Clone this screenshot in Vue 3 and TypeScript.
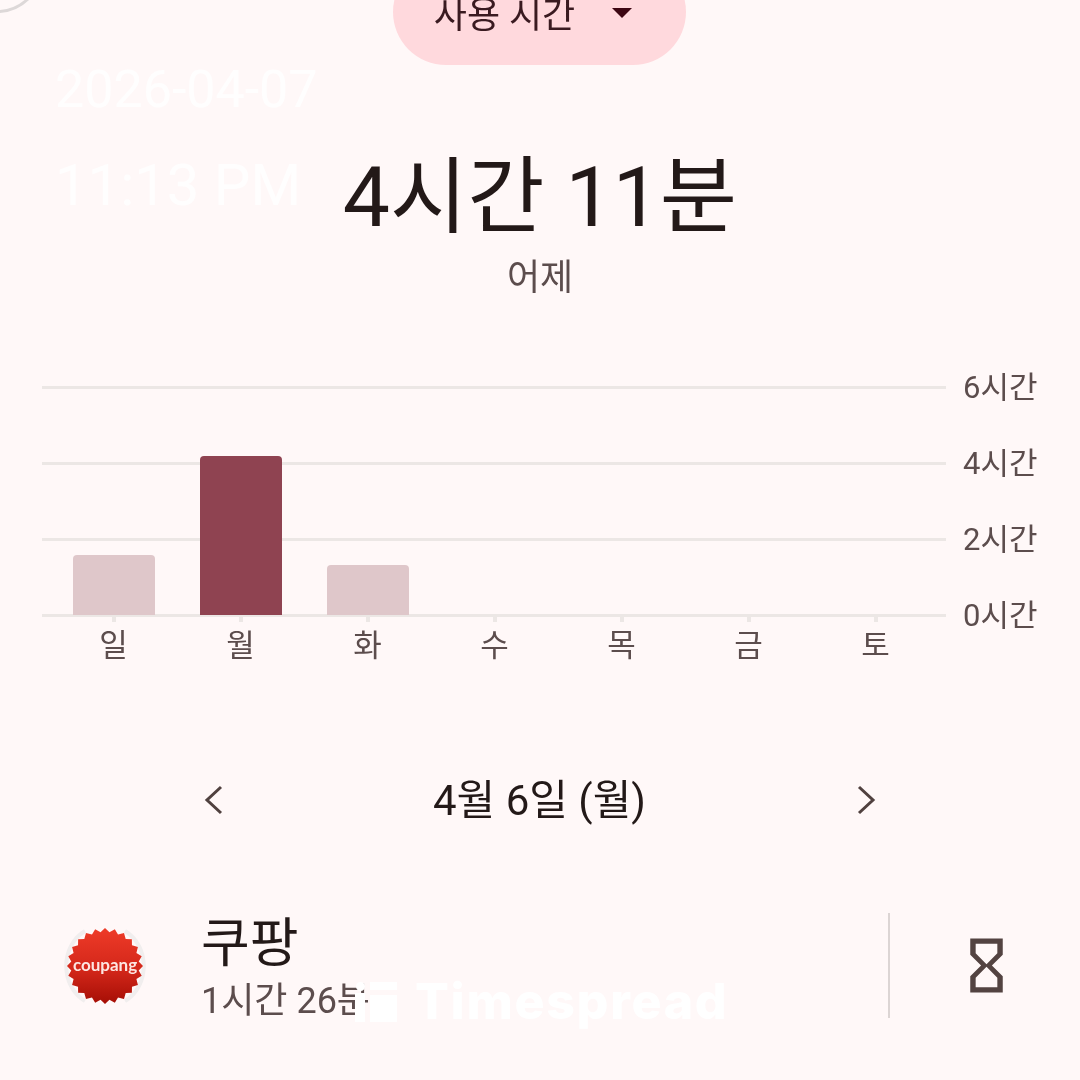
<script setup lang="ts">
const gridLabels = ['6시간', '4시간', '2시간', '0시간']

// bar height in px, measured from the axis
const days = [
  { label: '일', height: 60, active: false },
  { label: '월', height: 159, active: true },
  { label: '화', height: 50, active: false },
  { label: '수', height: 0, active: false },
  { label: '목', height: 0, active: false },
  { label: '금', height: 0, active: false },
  { label: '토', height: 0, active: false },
]

// the coupang badge is a scalloped disc, so work the outline out
const teeth = 24
const badgePoints = Array.from({ length: teeth * 2 }, (_, i) => {
  const r = i % 2 === 0 ? 38 : 34
  const a = (Math.PI * i) / teeth
  return `${(42 + r * Math.cos(a)).toFixed(2)},${(42 + r * Math.sin(a)).toFixed(2)}`
}).join(' ')
</script>

<template>
  <div class="screen">
    <div class="corner-ring"></div>

    <button class="pill" type="button">
      <span>사용 시간</span>
      <i class="caret"></i>
    </button>

    <h1 class="total">4시간 11분</h1>
    <p class="when">어제</p>

    <section class="chart">
      <div class="plot">
        <div class="grid">
          <div v-for="l in gridLabels" :key="l" class="grid-line"></div>
        </div>
        <div class="bars">
          <div v-for="d in days" :key="d.label" class="bar-col">
            <div class="bar" :class="{ active: d.active }" :style="{ height: d.height + 'px' }"></div>
          </div>
        </div>
        <div class="days">
          <div v-for="d in days" :key="d.label" class="day">
            <i class="tick"></i>
            <span>{{ d.label }}</span>
          </div>
        </div>
      </div>
      <div class="y-labels">
        <span v-for="l in gridLabels" :key="l">{{ l }}</span>
      </div>
    </section>

    <nav class="date-nav">
      <svg class="chev" width="24" height="36" viewBox="0 0 24 36" fill="none">
        <path d="M20 5 6 18l14 13" />
      </svg>
      <span class="date">4월 6일 (월)</span>
      <svg class="chev" width="24" height="36" viewBox="0 0 24 36" fill="none">
        <path d="m5 5 14 13L5 31" />
      </svg>
    </nav>

    <div class="app-row">
      <svg class="app-icon" width="84" height="84" viewBox="0 0 84 84">
        <defs>
          <linearGradient id="badge" x1="0" y1="0" x2="0" y2="1">
            <stop offset="0" stop-color="#ee3b28" />
            <stop offset="0.55" stop-color="#d3271a" />
            <stop offset="1" stop-color="#a50e05" />
          </linearGradient>
        </defs>
        <path class="badge-shade" d="M22 7C-3 22-3 62 22 77M62 7c25 15 25 55 0 70" />
        <polygon :points="badgePoints" fill="url(#badge)" />
        <text x="42" y="47" text-anchor="middle" class="badge-text">coupang</text>
      </svg>
      <div class="app-text">
        <div class="app-name">쿠팡</div>
        <div class="app-time">1시간 26분</div>
      </div>
      <div class="divider"></div>
      <svg class="hourglass" width="65" height="65" viewBox="0 0 24 24">
        <path
          d="M6 2v6h.01L6 8.01 10 12l-4 4 .01.01H6V22h12v-5.99h-.01L18 16l-4-4 4-3.99-.01-.01H18V2H6zm10 14.5V20H8v-3.5l4-4 4 4zm-4-5l-4-4V4h8v3.5l-4 4z"
        />
      </svg>
    </div>

    <!-- capture overlays burnt into the picture -->
    <div class="stamp stamp-date">2026-04-07</div>
    <div class="stamp stamp-time">11:13 PM</div>
    <div class="watermark">
      <span class="wm-logo">
        <i class="wm-dot"></i>
        <i class="wm-bar"></i>
        <i class="wm-top"></i>
        <i class="wm-block"></i>
      </span>
      <span class="wm-text">Timespread</span>
    </div>
  </div>
</template>

<style>
html,
body {
  margin: 0;
  background: #fff8f8;
}
</style>

<style scoped>
.screen {
  position: relative;
  width: 1080px;
  height: 1080px;
  overflow: hidden;
  display: flex;
  flex-direction: column;
  align-items: center;
  background: #fff8f8;
  color: #231918;
  font-family: Roboto, 'Noto Sans CJK KR', sans-serif;
  filter: blur(0.6px);
}
.corner-ring {
  position: absolute;
  left: -49px;
  top: -79px;
  width: 86px;
  height: 86px;
  border: 3px solid #ddd8d8;
  border-radius: 50%;
}
.pill {
  flex: none;
  width: 293px;
  height: 106px;
  margin: -41px 1px 0 0;
  display: flex;
  align-items: center;
  justify-content: center;
  gap: 37px;
  padding: 0 13px 0 0;
  border: none;
  border-radius: 53px;
  background: #ffd9dd;
  color: #3a1a20;
  font: inherit;
  font-size: 36px;
}
.caret {
  width: 0;
  height: 0;
  margin-top: 1px;
  border-left: 10px solid transparent;
  border-right: 10px solid transparent;
  border-top: 10px solid #3d0713;
}
.total {
  margin: 85px 0 0;
  font-size: 84px;
  font-weight: 400;
  line-height: 96px;
}
.when {
  margin: 9px 0 0;
  color: #5c4d4d;
  font-size: 36px;
  line-height: 46px;
}
.chart {
  align-self: stretch;
  margin: 85px 0 0 42px;
  display: flex;
}
.plot {
  position: relative;
  width: 904px;
}
.grid {
  position: absolute;
  left: 0;
  right: 0;
  top: 0;
  height: 231px;
  display: flex;
  flex-direction: column;
  justify-content: space-between;
}
.grid-line {
  height: 3px;
  background: #ece7e5;
}
.bars,
.days {
  position: relative;
  display: grid;
  grid-template-columns: repeat(7, 127px);
  padding: 0 8px;
}
.bars {
  height: 229px;
}
.bar-col {
  display: flex;
  align-items: flex-end;
  justify-content: center;
}
.bar {
  width: 82px;
  border-radius: 4px 4px 0 0;
  background: #dfc7ca;
}
.bar.active {
  background: #8f4351;
}
.day {
  display: flex;
  flex-direction: column;
  align-items: center;
  color: #5c4d4d;
  font-size: 31px;
  line-height: 38px;
}
.tick {
  width: 4px;
  height: 7px;
  margin-bottom: 5px;
  background: #ece7e5;
}
.y-labels {
  height: 256px;
  margin: -12px 0 0 17px;
  display: flex;
  flex-direction: column;
  justify-content: space-between;
  color: #5c4d4d;
  font-size: 31px;
  line-height: 28px;
}
.date-nav {
  width: 677px;
  margin: 111px 1px 0 0;
  display: flex;
  align-items: center;
  justify-content: space-between;
}
.chev {
  margin-top: -3px;
  stroke: #50413f;
  stroke-width: 3;
}
.date {
  font-size: 42px;
  line-height: 50px;
}
.app-row {
  align-self: stretch;
  margin-top: 82.5px;
  padding-left: 63px;
  display: flex;
  align-items: center;
}
.app-icon {
  flex: none;
}
.badge-shade {
  fill: none;
  stroke: #f1eeee;
  stroke-width: 4;
}
.badge-text {
  fill: #fde6e2;
  font-family: Lato, sans-serif;
  font-size: 17px;
  font-weight: 700;
}
.app-text {
  width: 688px;
  margin: 6px 0 0 54px;
}
.app-name {
  font-size: 53px;
  line-height: 58px;
}
.app-time {
  margin-top: 6px;
  color: #5c4d4d;
  font-size: 36px;
  line-height: 44px;
}
.divider {
  width: 2px;
  height: 105px;
  margin-left: -1px;
  background: #dcd5d4;
}
.hourglass {
  margin-left: 64px;
  fill: #534341;
}
.stamp {
  position: absolute;
  left: 55px;
  color: #fff;
  opacity: 0.9;
  white-space: nowrap;
}
.stamp-date {
  top: 61px;
  font-size: 52px;
  line-height: 58px;
}
.stamp-time {
  top: 150px;
  font-size: 58px;
  line-height: 70px;
}
.watermark {
  position: absolute;
  left: 355px;
  top: 980px;
  display: flex;
  align-items: flex-start;
  gap: 18px;
  color: #fff;
}
.wm-logo {
  position: relative;
  display: block;
  width: 42px;
  height: 42px;
}
.wm-logo i {
  position: absolute;
  background: #fff;
}
.wm-dot {
  left: 1px;
  top: 2px;
  width: 9px;
  height: 9px;
  border-radius: 50%;
}
.wm-bar {
  left: 0;
  top: 13px;
  width: 10px;
  height: 29px;
}
.wm-top {
  left: 15px;
  top: 2px;
  width: 27px;
  height: 8px;
}
.wm-block {
  left: 15px;
  top: 15px;
  width: 27px;
  height: 27px;
}
.wm-text {
  font-family: Inter, sans-serif;
  font-size: 50px;
  font-weight: 800;
  line-height: 42px;
  letter-spacing: 1.7px;
}
</style>
